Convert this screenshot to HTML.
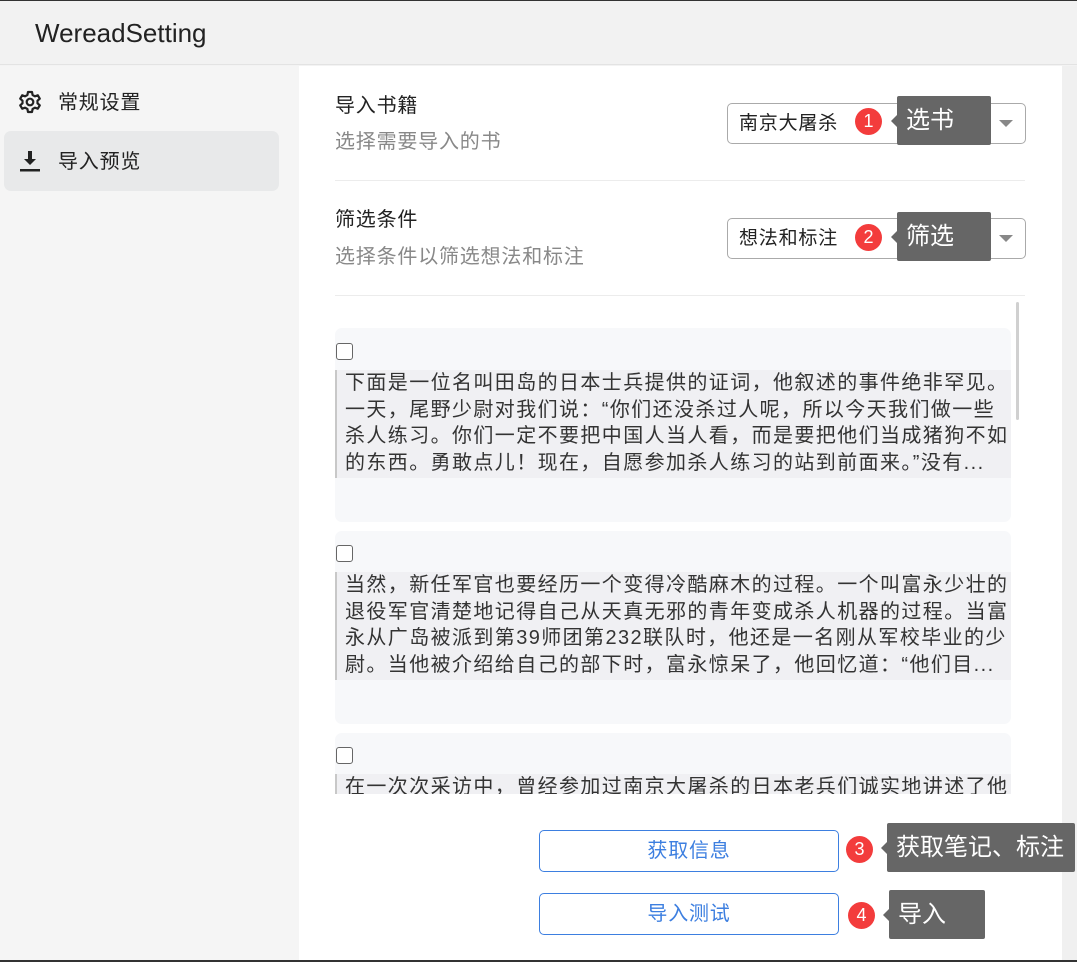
<!DOCTYPE html>
<html><head><meta charset="utf-8"><style>
*{box-sizing:border-box;margin:0;padding:0}
body{width:1077px;height:962px;position:relative;overflow:hidden;background:#f3f3f3;font-family:"Liberation Sans","Noto Sans CJK SC",sans-serif;color:#222}
.a{position:absolute}
.hdr{left:0;top:0;width:1077px;height:65px;background:#f2f2f2;border-bottom:1px solid #e3e3e3;border-top:1px solid #333}
.side{left:0;top:66px;width:299px;height:896px;background:#f5f5f5}
.main{left:299px;top:66px;width:763px;height:894px;background:#fff}
.strip{left:1062px;top:66px;width:15px;height:894px;background:#f0f0f0}
.t20{font-size:20px;line-height:26px;white-space:nowrap;letter-spacing:0.8px}
.sub{color:#888}
.sel{left:727px;width:299px;height:41px;border:1px solid #aaa;border-radius:5px;background:#fff;padding:9px 11px;font-size:19px;line-height:22px;letter-spacing:0.8px}
.arrow{width:0;height:0;border-left:7px solid transparent;border-right:7px solid transparent;border-top:7px solid #888}
.badge{width:27px;height:27px;border-radius:50%;background:#f33c3c;color:#fff;font-size:18px;line-height:27px;text-align:center}
.tip{background:#666;color:#fff;font-size:24px;border-radius:2px;padding:0 9px;line-height:49px;white-space:nowrap}
.tip:before{content:"";position:absolute;left:-6px;top:19px;border-top:6px solid transparent;border-bottom:6px solid transparent;border-right:6px solid #666}
.card{left:335px;width:676px;background:#f7f8fa;border-radius:7px}
.cb{position:absolute;left:1px;width:17px;height:17px;border:1.5px solid #666;border-radius:3px;background:#fff}
.q{position:absolute;left:0;width:676px;background:#f0f0f3;border-left:2px solid #c8c8c8;padding-left:8px;font-size:20px;line-height:26.7px;white-space:nowrap;overflow:hidden;color:#333;letter-spacing:1.4px}
.btn{left:539px;width:300px;height:42px;border:1px solid #3d7fe0;border-radius:5px;color:#3d7fe0;font-size:20px;text-align:center;line-height:40px;background:#fff;letter-spacing:0.8px}
.div{left:335px;width:690px;height:1px;background:#ececec}
</style></head><body>
<div class="a hdr"><div class="a" style="left:35px;top:17px;font-size:26px;color:#222">WereadSetting</div></div>
<div class="a side">
 <svg class="a" style="left:18px;top:24px" width="24" height="24" viewBox="0 0 24 24"><path fill="none" stroke="#222" stroke-width="2.2" stroke-linejoin="round" d="M10 2h4l.6 3 2.3 1.3 2.9-1 2 3.4-2.3 2v2.6l2.3 2-2 3.4-2.9-1-2.3 1.3-.6 3h-4l-.6-3-2.3-1.3-2.9 1-2-3.4 2.3-2v-2.6l-2.3-2 2-3.4 2.9 1L9.4 5z"/><circle cx="12" cy="12" r="3.3" fill="none" stroke="#222" stroke-width="2.2"/></svg>
 <div class="a t20" style="left:58px;top:24px">常规设置</div>
 <div class="a" style="left:4px;top:65px;width:275px;height:60px;background:#e8e9ea;border-radius:7px"></div>
 <svg class="a" style="left:18px;top:83px" width="24" height="24" viewBox="0 0 24 24"><path fill="#222" d="M10 2h4v8h4l-6 6-6-6h4z M2 20h20v2.5H2z"/></svg>
 <div class="a t20" style="left:58px;top:83px">导入预览</div>
</div>
<div class="a main"></div>
<div class="a strip"></div>
<div class="a t20" style="left:335px;top:93px">导入书籍</div>
<div class="a t20 sub" style="left:335px;top:129px">选择需要导入的书</div>
<div class="a div" style="top:180px"></div>
<div class="a t20" style="left:335px;top:207px">筛选条件</div>
<div class="a t20 sub" style="left:335px;top:244px">选择条件以筛选想法和标注</div>
<div class="a div" style="top:295px"></div>

<div class="a sel" style="top:103px">南京大屠杀<div class="a arrow" style="left:271px;top:16px"></div></div>
<div class="a badge" style="left:855px;top:108px">1</div>
<div class="a tip" style="left:897px;top:96px;width:94px">选书</div>
<div class="a sel" style="top:218px">想法和标注<div class="a arrow" style="left:271px;top:16px"></div></div>
<div class="a badge" style="left:855px;top:224px">2</div>
<div class="a tip" style="left:897px;top:212px;width:94px">筛选</div>

<div class="a" style="left:1016px;top:302px;width:3px;height:118px;background:#d0d0d0;border-radius:2px"></div>

<div class="a card" style="top:328px;height:194px">
 <div class="cb" style="top:15px"></div>
 <div class="q" style="top:42px;height:108px">下面是一位名叫田岛的日本士兵提供的证词，他叙述的事件绝非罕见。<br>一天，尾野少尉对我们说：“你们还没杀过人呢，所以今天我们做一些<br>杀人练习。你们一定不要把中国人当人看，而是要把他们当成猪狗不如<br>的东西。勇敢点儿！现在，自愿参加杀人练习的站到前面来。”没有...</div>
</div>
<div class="a card" style="top:531px;height:193px">
 <div class="cb" style="top:14px"></div>
 <div class="q" style="top:41px;height:108px">当然，新任军官也要经历一个变得冷酷麻木的过程。一个叫富永少壮的<br>退役军官清楚地记得自己从天真无邪的青年变成杀人机器的过程。当富<br>永从广岛被派到第39师团第232联队时，他还是一名刚从军校毕业的少<br>尉。当他被介绍给自己的部下时，富永惊呆了，他回忆道：“他们目...</div>
</div>
<div class="a" style="left:335px;top:733px;width:690px;height:61px;overflow:hidden">
 <div class="a" style="left:0;top:0;width:676px;height:120px;background:#f7f8fa;border-radius:7px">
  <div class="cb" style="top:14px"></div>
  <div class="q" style="top:41px;height:60px">在一次次采访中，曾经参加过南京大屠杀的日本老兵们诚实地讲述了他</div>
 </div>
</div>

<div class="a btn" style="top:830px">获取信息</div>
<div class="a badge" style="left:846px;top:836px">3</div>
<div class="a tip" style="left:887px;top:823px;width:188px">获取笔记、标注</div>
<div class="a btn" style="top:893px">导入测试</div>
<div class="a badge" style="left:848px;top:902px">4</div>
<div class="a tip" style="left:889px;top:890px;width:96px">导入</div>
<div class="a" style="left:0;top:960px;width:1077px;height:2px;background:#333"></div>
</body></html>
